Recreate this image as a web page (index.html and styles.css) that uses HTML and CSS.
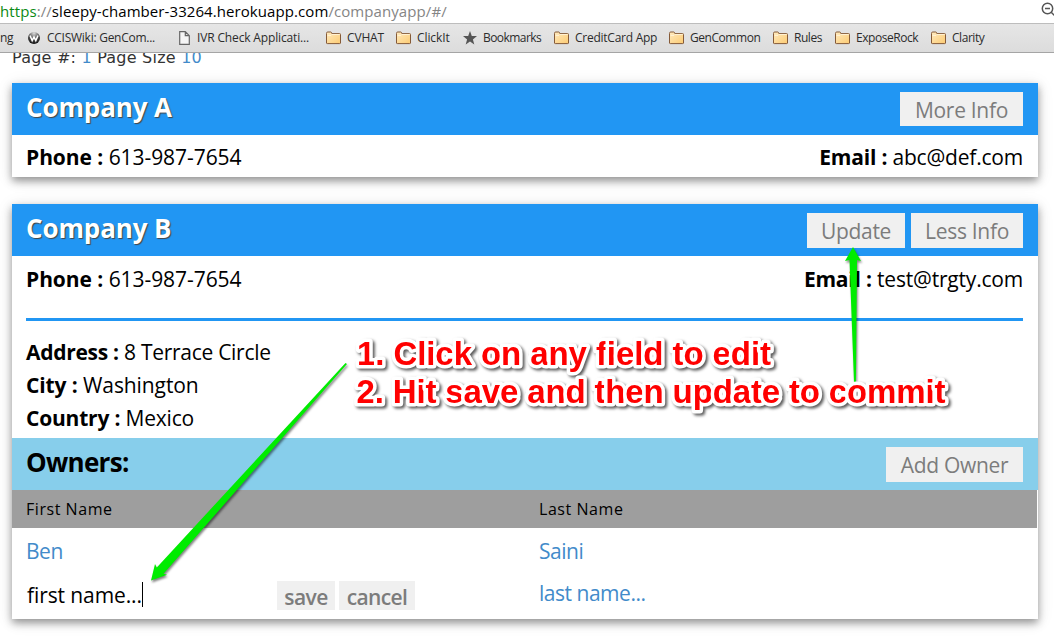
FILE: index.html
```html
<!DOCTYPE html>
<html lang="en">
<head>
<meta charset="utf-8">
<title>Company App</title>
<link rel="stylesheet" href="styles.css">
</head>
<body>
<svg class="defs" width="0" height="0" aria-hidden="true">
  <defs>
    <linearGradient id="fold" x1="0" y1="0" x2="1" y2="1"><stop offset="0" stop-color="#ffeabf"/><stop offset="1" stop-color="#fccb72"/></linearGradient>
    <radialGradient id="ball" cx=".5" cy=".1" r=".9"><stop offset="0" stop-color="#ddd"/><stop offset=".5" stop-color="#555"/><stop offset="1" stop-color="#111"/></radialGradient>
    <symbol id="folder" viewBox="0 0 16 14"><path d="M1.500 12V2.400Q1.500 1 2.700 1H5.800Q6.600 1 6.800 2.500H14.500Q15.500 2.500 15.500 3.500V12Q15.500 12.600 14.700 12.600H2.300Q1.500 12.600 1.500 12Z" fill="url(#fold)" stroke="#855a38"/><path d="M2.500 4.400H6L7 3.400H14.700" fill="none" stroke="#fff3d8"/></symbol>
  </defs>
</svg>
<header class="browser">
  <div class="urlbar">
    <div class="url"><span class="scheme">https</span><span class="dim">://</span>sleepy-chamber-33264.herokuapp.com<span class="dim">/companyapp/#/</span></div>
    <svg class="zoom" width="13" height="16" viewBox="0 0 13 16"><circle cx="6.5" cy="6.5" r="5.2" fill="none" stroke="#555" stroke-width="1.5"/><path d="M4 6.500H9M10.200 10.200L14 14" stroke="#555" stroke-width="1.5"/></svg>
  </div>
  <nav class="bookmarks">
    <span class="bm">ng</span>
    <span class="bm b-wiki"><svg width="12" height="12" viewBox="0 0 12 12"><circle cx="6" cy="6" r="6" fill="url(#ball)"/><path d="M2 3.500L4.200 8.600L6 5L7.800 8.600L10 3.500" fill="none" stroke="#fff" stroke-width="1.5"/></svg>CCISWiki: GenCom...</span>
    <span class="bm b-ivr"><svg width="11" height="14" viewBox="0 0 11 14"><path d="M.7.7H6.300L10.300 4.700V13.300H.7ZM6.300.7V4.700H10.300" fill="#f5f5f5" stroke="#666" stroke-width="1.2"/></svg>IVR Check Applicati...</span>
    <span class="bm b-cv"><svg width="16" height="14"><use href="#folder"/></svg>CVHAT</span>
    <span class="bm b-click"><svg width="16" height="14"><use href="#folder"/></svg>ClickIt</span>
    <span class="bm b-star"><svg width="14" height="14" viewBox="0 0 14 14"><path d="M7 0L8.800 4.900L14 5.100L9.900 8.400L11.300 13.600L7 10.600L2.700 13.600L4.100 8.400L0 5.100L5.200 4.900Z" fill="#555"/></svg>Bookmarks</span>
    <span class="bm b-card"><svg width="16" height="14"><use href="#folder"/></svg>CreditCard App</span>
    <span class="bm b-gen"><svg width="16" height="14"><use href="#folder"/></svg>GenCommon</span>
    <span class="bm b-rules"><svg width="16" height="14"><use href="#folder"/></svg>Rules</span>
    <span class="bm b-rock"><svg width="16" height="14"><use href="#folder"/></svg>ExposeRock</span>
    <span class="bm b-clar"><svg width="16" height="14"><use href="#folder"/></svg>Clarity</span>
  </nav>
</header>
<main>
  <div class="pager">Page #: <a>1</a> Page Size <a>10</a></div>
  <section class="card">
    <div class="head"><h2>Company A</h2><div class="actions"><button class="more">More Info</button></div></div>
    <div class="contact"><span class="phone"><b>Phone :</b> 613-987-7654</span><span class="mail"><b>Email :</b> abc@def.com</span></div>
  </section>
  <section class="card open">
    <div class="head"><h2>Company B</h2><div class="actions"><button class="update">Update</button><button class="less">Less Info</button></div></div>
    <div class="contact"><span class="phone"><b>Phone :</b> 613-987-7654</span><span class="mail"><b>Email :</b> test@trgty.com</span></div>
    <div class="details">
      <div><span class="addr"><b>Address :</b> 8 Terrace Circle</span></div>
      <div><span class="city"><b>City :</b> Washington</span></div>
      <div><span class="country"><b>Country :</b> Mexico</span></div>
    </div>
    <div class="head owners"><h2>Owners:</h2><div class="actions"><button class="add">Add Owner</button></div></div>
    <div class="cols"><span>First Name</span><span>Last Name</span></div>
    <div class="rows">
      <div class="row"><a>Ben</a><a>Saini</a></div>
      <div class="row">
        <div class="edit"><div class="input"><span>first name...</span><i class="caret"></i></div><button class="save">save</button><button class="cancel">cancel</button></div>
        <a>last name...</a>
      </div>
    </div>
  </section>
</main>
<svg class="notes" width="1054" height="636" viewBox="0 0 1054 636">
  <g class="arrows">
    <path d="M345.500 363L347 364L163.500 573.800L167 574.700L151 580.500L155 564L156.800 567.500Z"/>
    <path d="M855.900 382L857 260L861 261L853 247L845 261L849.500 260L854 382Z"/>
  </g>
  <g class="callout">
    <text x="357" y="365" textLength="414">1. Click on any field to edit</text>
    <text x="356.500" y="403" textLength="589">2. Hit save and then update to commit</text>
  </g>
</svg>
</body>
</html>
```
FILE: styles.css
```css
* { box-sizing: border-box; }
body { margin: 0; width: 1054px; height: 636px; overflow: hidden; background: #fff; color: #000; font-family: "Open Sans", "Noto Sans", sans-serif; position: relative; }
b { font-weight: 700; }
.defs { position: absolute; }
.browser { height: 53px; background: #fff; overflow: hidden; position: relative; z-index: 1; }
.urlbar { height: 23px; display: flex; justify-content: space-between; }
.url { font-size: 15px; line-height: 22px; letter-spacing: .08px; white-space: nowrap; }
.scheme { color: #0b8a14; }
.dim { color: #858585; }
.zoom { margin-top: 2px; }
.bookmarks { height: 30px; border-top: 1px solid #bdbdbd; border-bottom: 1px solid #a5a5a5; background: linear-gradient(#e6e6e6, #dcdcdc); display: grid; grid-template-columns: 28px 151px 146px 70px 68px 90px 115px 104px 62px 96px 80px; color: #2c2c2c; font-size: 12px; line-height: 28px; letter-spacing: -.45px; }
.bm { display: flex; align-items: center; gap: 6px; white-space: nowrap; }
.b-wiki, .b-ivr { gap: 7px; }
.b-wiki { letter-spacing: -.26px; }
.b-ivr, .b-cv { letter-spacing: -.15px; }
.b-click { letter-spacing: -.1px; }
.b-card { letter-spacing: -.25px; }
.b-star { letter-spacing: -.55px; }
.pager { height: 30px; padding-left: 12px; font: 16px/18px "DejaVu Sans", sans-serif; letter-spacing: .22px; color: #333; margin-top: -4px; }
a { color: #428bca; }
main { padding: 0 16px 0 0; }
.card { margin: 4px 0 0 12px; width: 1026px; height: 94px; background: #fff; box-shadow: 0 4px 8px rgba(0,0,0,.38), 0 2px 16px rgba(0,0,0,.1); }
.open { height: 415px; margin-top: 27px; }
.head { height: 52px; padding: 0 15px 0 14px; background: #2196f3; display: flex; justify-content: space-between; }
h2 { margin: 0; font-size: 26px; line-height: 48px; font-weight: 700; letter-spacing: -.12px; white-space: nowrap; }
.owners h2 { letter-spacing: -.7px; }
.head:not(.owners) h2 { color: #fff; text-shadow: 1px 1px 1px #444; }
.actions { display: flex; gap: 6px; padding-top: 9px; }
button { border: 0; padding: 0; background: #f0f0f0; color: #7c7c7c; font: 21px/36px "Open Sans", sans-serif; letter-spacing: -.3px; height: 34px; white-space: nowrap; text-align: center; }
.open .head button { height: 35px; }
.more { width: 123px; }
.update { width: 98px; }
.less { width: 112px; }
.add { width: 137px; }
.contact { height: 42px; padding: 0 15px 0 14px; display: flex; justify-content: space-between; font-size: 21px; line-height: 44px; white-space: nowrap; }
.phone { letter-spacing: -.06px; }
.mail { letter-spacing: -.2px; }
.open .contact { height: 62px; line-height: 46px; }
.details { margin: 0 15px 0 14px; border-top: 3px solid #2196f3; height: 120px; padding-top: 15px; font-size: 21px; line-height: 33px; white-space: nowrap; }
.addr { letter-spacing: -.28px; }
.city { letter-spacing: -.1px; }
.country { letter-spacing: -.2px; }
.owners { background: #87ceeb; }
.cols { height: 38px; width: 1025px; background: #9e9e9e; display: grid; grid-template-columns: 513px 1fr; padding-left: 14px; font-size: 16px; letter-spacing: .55px; line-height: 38px; }
.rows { padding: 2px 0 0 14px; font-size: 21px; line-height: 42px; }
.row { display: grid; grid-template-columns: 513px 1fr; height: 42px; }
.row a { letter-spacing: -.48px; }
.edit { display: flex; padding-top: 9px; letter-spacing: -.1px; }
.input { width: 251px; height: 29px; line-height: 28px; display: flex; padding-left: 1px; }
.caret { width: 1px; height: 25px; background: #000; margin-top: 1px; }
.edit button { font-weight: 600; line-height: 32px; height: 29px; letter-spacing: -.6px; }
.save { width: 58px; margin-right: 4px; }
.cancel { width: 76px; }
.notes { position: absolute; left: 0; top: 0; z-index: 2; }
.arrows { fill: #00ec00; filter: drop-shadow(1px 2px 1px rgba(0,0,0,.5)); }
.callout { font: bold 33px "Liberation Sans", Arial, sans-serif; fill: #f00; stroke: #fff; stroke-width: 7px; stroke-linejoin: round; paint-order: stroke; filter: drop-shadow(2px 2px 1.500px rgba(0,0,0,.65)); }
```
